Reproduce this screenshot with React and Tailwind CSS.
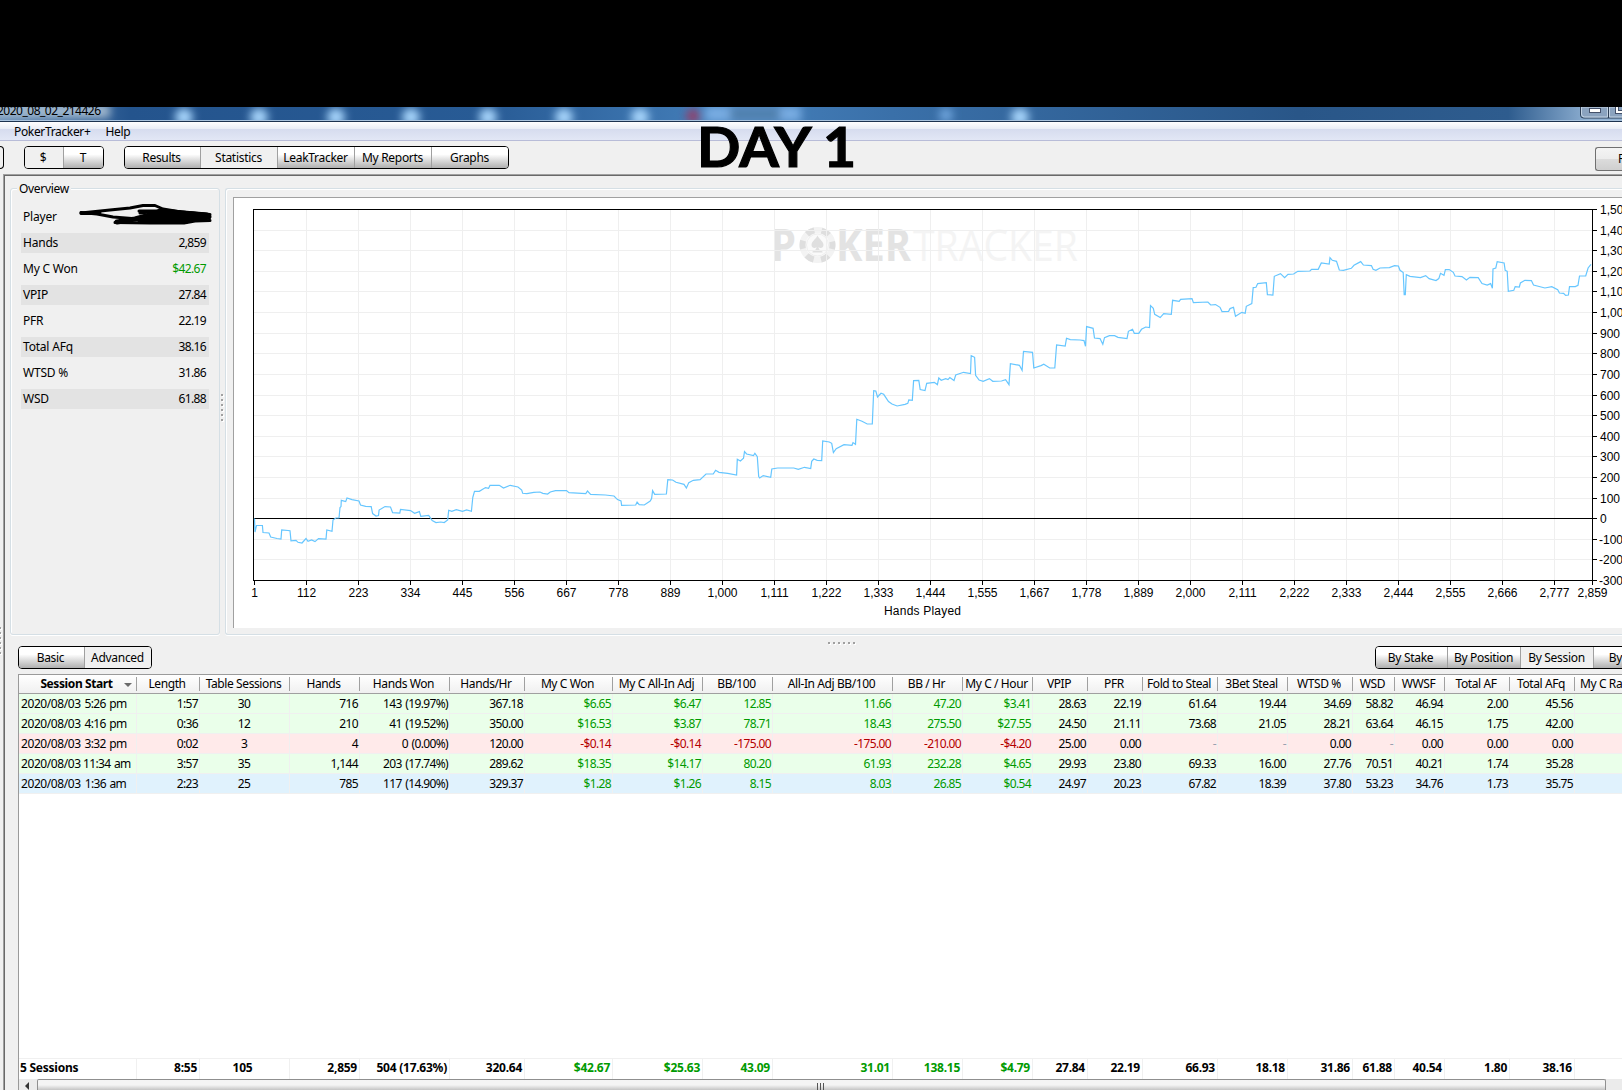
import React from 'react';
import clsx from 'clsx';

const stats = [
  { label: 'Player', value: '' },
  { label: 'Hands', value: '2,859' },
  { label: 'My C Won', value: '$42.67', green: true },
  { label: 'VPIP', value: '27.84' },
  { label: 'PFR', value: '22.19' },
  { label: 'Total AFq', value: '38.16' },
  { label: 'WTSD %', value: '31.86' },
  { label: 'WSD', value: '61.88' },
];

const columns = [
  { title: 'Session Start', w: 'w-[118px]' },
  { title: 'Length', w: 'w-[63px]' },
  { title: 'Table Sessions', w: 'w-[90px]', center: true },
  { title: 'Hands', w: 'w-[70px]' },
  { title: 'Hands Won', w: 'w-[90px]' },
  { title: 'Hands/Hr', w: 'w-[75px]' },
  { title: 'My C Won', w: 'w-[88px]', money: true },
  { title: 'My C All-In Adj', w: 'w-[90px]', money: true },
  { title: 'BB/100', w: 'w-[70px]', money: true },
  { title: 'All-In Adj BB/100', w: 'w-[120px]', money: true },
  { title: 'BB / Hr', w: 'w-[70px]', money: true },
  { title: 'My C / Hour', w: 'w-[70px]', money: true },
  { title: 'VPIP', w: 'w-[55px]' },
  { title: 'PFR', w: 'w-[55px]' },
  { title: 'Fold to Steal', w: 'w-[75px]' },
  { title: '3Bet Steal', w: 'w-[70px]' },
  { title: 'WTSD %', w: 'w-[65px]' },
  { title: 'WSD', w: 'w-[42px]' },
  { title: 'WWSF', w: 'w-[50px]' },
  { title: 'Total AF', w: 'w-[65px]' },
  { title: 'Total AFq', w: 'w-[65px]' },
];

const sessions = [
  { bg: 'bg-[#eaffea]', cells: ['5:26 pm', '1:57', '30', '716', '143 (19.97%)', '367.18', '$6.65', '$6.47', '12.85', '11.66', '47.20', '$3.41', '28.63', '22.19', '61.64', '19.44', '34.69', '58.82', '46.94', '2.00', '45.56'] },
  { bg: 'bg-[#eaffea]', cells: ['4:16 pm', '0:36', '12', '210', '41 (19.52%)', '350.00', '$16.53', '$3.87', '78.71', '18.43', '275.50', '$27.55', '24.50', '21.11', '73.68', '21.05', '28.21', '63.64', '46.15', '1.75', '42.00'] },
  { bg: 'bg-[#ffeaea]', cells: ['3:32 pm', '0:02', '3', '4', '0 (0.00%)', '120.00', '-$0.14', '-$0.14', '-175.00', '-175.00', '-210.00', '-$4.20', '25.00', '0.00', '-', '-', '0.00', '-', '0.00', '0.00', '0.00'] },
  { bg: 'bg-[#eaffea]', cells: ['11:34 am', '3:57', '35', '1,144', '203 (17.74%)', '289.62', '$18.35', '$14.17', '80.20', '61.93', '232.28', '$4.65', '29.93', '23.80', '69.33', '16.00', '27.76', '70.51', '40.21', '1.74', '35.28'] },
  { bg: 'bg-[#e0f2fd]', cells: ['1:36 am', '2:23', '25', '785', '117 (14.90%)', '329.37', '$1.28', '$1.26', '8.15', '8.03', '26.85', '$0.54', '24.97', '20.23', '67.82', '18.39', '37.80', '53.23', '34.76', '1.73', '35.75'] },
];

const totals = ['5 Sessions', '8:55', '105', '2,859', '504 (17.63%)', '320.64', '$42.67', '$25.63', '43.09', '31.01', '138.15', '$4.79', '27.84', '22.19', '66.93', '18.18', '31.86', '61.88', '40.54', '1.80', '38.16'];

const xLabels = ['1', '112', '223', '334', '445', '556', '667', '778', '889', '1,000', '1,111', '1,222', '1,333', '1,444', '1,555', '1,667', '1,778', '1,889', '2,000', '2,111', '2,222', '2,333', '2,444', '2,555', '2,666', '2,777'];
const yLabels = ['1,500', '1,400', '1,300', '1,200', '1,100', '1,000', '900', '800', '700', '600', '500', '400', '300', '200', '100', '0', '-100', '-200', '-300'];
const gridY = (i) => Math.round(209 + (i * 371) / 18) + 0.5;

const winnings = `254.5,518.5 255,532 256.5,525.5 262.4,525.5 263,532.5 269,533 270.7,537 277,538.5 281,539 281.7,530 290,530.7 291,540.8 296,540.3 298,542.3 302,543 306,538.5 308,541.3 311.6,540 315,541.6 318.5,538.6 326,539 326.8,530 332,531.3 333,520 335.8,518 339,518 340,507.6 341,506.6 341.3,500.3 345.7,501.6 347,498 352,499.6 359,501 360.5,505 365.7,506.3 371.2,506.6 372.6,513.6 376,516 378.5,515.6 379.1,510 385,506.6 390.5,507 392.6,512.6 399.8,513 400.5,509.3 410.5,510.6 414.6,513.3 419.4,511.6 420.8,516.3 428.7,515.3 432.2,520.6 436,522.6 440.8,522 444.2,522.6 447.7,520 448.7,510.3 451.8,511.3 456.3,509.6 462.5,511.3 466.6,510 471.4,511.3 472.8,497.3 474.5,491.3 479.3,491.3 485.5,487.6 488.6,488.3 490,485.3 499.3,485.3 503.5,488 510.3,485.3 518,487 521.7,490 522.7,493.3 526.9,493.6 533.8,492.3 540,492
542.8,493.3 547.6,494 550.3,492 555.5,490.6 566.5,490.6 569,492.6 585.8,493.6 587.5,491 590.6,494.3 605.4,495 614,496 617.5,499.6 621,501 621.6,505.3 635.7,505 637.1,502 639.2,504.6 644.3,505 650.2,501 651.6,498.6 652.6,490.6 654.7,494.3 666.4,494 667.8,479.6 672.6,480 676,482.3 684,484.3 686.4,488 688.8,482.6 693.3,480.3 700.1,479.6 706,474 713.2,474 715.6,470.3 719,472.3 727.7,473.3 736.6,475 737.3,459.3 740.4,461 743.5,458.3 744.5,451.6 746.6,454 753.5,455.6 754.9,453.3 757.3,456.6 758.7,476.6 759.7,478 763.2,475.6 770.7,477.3 771.8,469 777.6,468 793.8,468 798.3,469.3 804.5,467.3 810.7,468.6 811.7,461.3 813.8,459 817.2,460.3 821.7,460.6 822.7,441 829.3,442 831.7,443.3 833.4,452.6 836.2,448.6 844,444.6 852,445.3 853,442.6 855.5,444.3 856.8,419.3 862,421.3 867.2,424 872.3,424
873.7,390.6 875.8,391 877.5,397 881,393.3 883.7,394.3 888.5,401.6 892,404 897.1,406 905,404.3 907.8,403.3 908.8,400 912.3,400.3 913.6,380.6 918.8,380.3 920.2,389.6 925,390.6 926.7,383.3 934.3,382.3 937.4,384.6 938.8,378 941.2,380.3 945.7,378.6 948,379.6 949.8,377.6 954,380.6 955.7,375 963.6,372.3 970.5,373.6 971.2,355.6 974.6,357.3 975.6,375.3 979.1,380 983.2,381.3 989.4,378.6 992.8,381.3 1001.5,381 1005.6,379.6 1009,384.6 1010.4,363.6 1019.4,365.3 1022.1,370.3 1023.5,351.3 1032.5,352.3 1033.8,368 1041,365.6 1043.8,364.3 1049.7,368 1054.8,368 1056.6,345 1065.2,346 1066.5,338.3 1070.3,339.6 1080,340
1084,340.6 1085.5,346.3 1086.6,326.6 1093.1,328.3 1094.5,338 1100,338.6 1102.8,344.3 1104.5,337.6 1109.4,335.6 1114.6,335.6 1118,337.3 1127,338.6 1128.4,331.3 1132.5,329.3 1134.3,333.3 1138.8,333.3 1141.5,329.3 1145.7,327 1149.5,327.6 1150.5,305.6 1153.3,308.3 1154.7,314.3 1160.2,317.6 1163.7,313.6 1171.3,314.3 1172.6,300.3 1179.2,301.3 1180.6,299.3 1192,298.6 1193.4,302.6 1207.9,302 1210.7,305 1215.5,304.6 1220,307.3 1222,311.6 1228.6,311.3 1230,308.6 1233.5,307.3 1235.5,316.3 1241.8,312.3 1245.2,313.3 1246.3,306.3 1251.8,303.6 1253.2,287.6 1256,287.3 1257.7,283.6 1266.3,282.6 1267.4,294.6 1272.9,295 1274.3,276.3 1280.5,273.6 1284.6,277.6 1288,274.3 1293.6,274 1297.8,271.3 1309.9,271 1311.6,269.3 1318.2,269.3 1321.3,263 1329.2,264 1330,257.6 1332.3,260.3 1336.5,261.3 1339.3,270 1343.4,270.3 1351.3,268.3 1354,265.3 1360.7,261.6 1363.4,265 1371.4,265.6 1373.1,269.3 1375.9,270.3 1380,268 1389.4,267.6 1394.5,265.6 1398.4,266 1400,270.3 1403.2,272.6 1404.2,294.6 1405.3,294.6 1406.3,274.6 1410,276.3 1420.5,277.6 1425.7,275.6 1429.1,278.6 1436,280.6 1438.8,278.6 1440.5,273.3 1444,275.3 1445.4,269.6 1449.2,269.6 1453.3,272.3 1455,276 1462,276.6 1466.4,280 1469.9,277.3 1478.2,277.6 1482,283.6 1487.2,285 1490.6,283.6 1492.4,288.3 1493,269 1495.8,268 1497.2,261.6 1504.1,263 1505.2,270.3 1507.2,271.3 1508.3,291.3 1513.8,290.3 1515.2,286.6 1519.3,287 1520.4,283 1524.9,280.3 1531.4,280.6 1533.5,285 1544.9,288 1551.8,286.6 1557.7,289.6 1559.4,293 1563.6,293.3 1565.6,295.3 1568.4,295 1569.5,286.6 1575.3,286.6 1578,285.3 1579.5,276 1585.7,276 1588.1,268 1591,264.3`;

const Dots = ({ vertical, className }) => (
  <div className={clsx('flex gap-[3px]', vertical && 'flex-col', className)}>
    {[0, 1, 2, 3, 4, 5].map((i) => (
      <i key={i} className="h-[2px] w-[2px] bg-[#a0a0a0] shadow-[1px_1px_0_#fff]" />
    ))}
  </div>
);

const ButtonGroup = ({ items, active, itemClass, className }) => (
  <div className={clsx('flex h-[23px] shrink-0 overflow-hidden rounded-[4px] border border-black', className)}>
    {items.map((item, i) => (
      <button
        key={item}
        className={clsx(
          'flex shrink-0 items-center justify-center whitespace-nowrap pt-px pr-px text-[12px] tracking-[-0.3px]',
          i > 0 ? 'border-l border-[#a0a0a0]' : '-ml-[2px] pl-px',
          item === active ? 'bg-[#f0f0f0]' : 'bg-linear-to-b from-white from-35% to-[#b0b0b0]',
          itemClass
        )}
      >
        {item}
      </button>
    ))}
  </div>
);

const TitleBar = () => (
  <div className="relative h-[15px] overflow-hidden border-b border-[#1d3350] bg-[#2b5c93]">
    <svg className="block" width="1622" height="14" viewBox="0 107 1622 14">
      <defs>
        <linearGradient id="aero">
          <stop offset="0" stopColor="#5f86b0" />
          <stop offset="0.08" stopColor="#24548d" />
          <stop offset="0.3" stopColor="#285b95" />
          <stop offset="0.45" stopColor="#4580bb" />
          <stop offset="0.55" stopColor="#3a70a9" />
          <stop offset="0.8" stopColor="#295688" />
          <stop offset="0.93" stopColor="#2e5c8e" />
          <stop offset="0.98" stopColor="#8fb0d2" />
        </linearGradient>
        <filter id="soft" x="-50%" y="-50%" width="200%" height="200%">
          <feGaussianBlur stdDeviation="4" />
        </filter>
      </defs>
      <rect x="0" y="107" width="1622" height="14" fill="url(#aero)" />
      <g filter="url(#soft)">
        <rect x="-10" y="104" width="120" height="14" fill="#a3b9cf" />
        {[184, 259, 336, 411, 488, 564, 640, 1020].map((x) => (
          <circle key={x} cx={x} cy="117" r="9" fill="#a6d4fb" />
        ))}
        <circle cx="946" cy="115" r="7" fill="#6fa5dd" />
        <rect x="705" y="106" width="96" height="16" fill="#78ace2" />
        <rect x="730" y="108" width="50" height="12" fill="#4c7ba9" />
        <circle cx="693" cy="116" r="7" fill="#94406a" />
      </g>
      <rect x="0" y="120" width="1622" height="1" fill="#a9c3dd" />
      <path d="M1580.5 107v8q0 3 3 3H1622M1608.5 107v11" fill="none" stroke="#2c3e55" />
      <path d="M1581.5 107v7q0 3 3 3h23v-10z" fill="#8ba3bf" stroke="#c5d4e4" />
      <path d="M1609.5 107v10h14v-10z" fill="#8ba3bf" stroke="#c5d4e4" />
      <rect x="1589.5" y="108.5" width="11" height="4" fill="#fff" stroke="#44516a" />
      <rect x="1615.5" y="103.500" width="12" height="10" fill="#fff" stroke="#44516a" />
      <rect x="1618.5" y="106.500" width="7" height="4" fill="#8ba3bf" stroke="#44516a" />
    </svg>
    <span className="absolute -top-[5px] -left-[3px] text-[12px] leading-[17px] tracking-[-0.5px]">2020_08_02_214426</span>
  </div>
);

const Scribble = () => (
  <svg className="absolute top-[-3px] left-[58px]" width="134" height="24" viewBox="79 204 134 24" fill="none" stroke="#000" strokeWidth="3" strokeLinecap="round" strokeLinejoin="round">
    <path d="M81 213L110 210 130 208 143 205.500H155L163 209 181 212 210 214.500" />
    <path d="M81 212.500L97 214 113 217 132 218.500M81 213.500L100 213" />
    <path d="M139 211L160 211 140 213M115 222.500L150 223 184 223 195 221 210 220.500" />
    <path d="M117 222L135 219 150 215 165 213 209 217 190 219 140 221 186 221 207 215 160 211 148 217 205 219" strokeWidth="5" />
    <path d="M145 216L165 210 207 214 200 220 150 222z" fill="#000" strokeWidth="2" />
  </svg>
);

const Chart = () => (
  <svg className="block" width="1388" height="430" viewBox="234 198 1388 430" fontFamily="'Liberation Sans', Arial, sans-serif" fontSize="12">
    {/* watermark */}
    <g fontFamily="'Open Sans', sans-serif" fontSize="44">
      <g fill="#e3e3e3" fontWeight="700">
        <text x="771" y="261" textLength="25" lengthAdjust="spacingAndGlyphs">P</text>
        <text x="836" y="261" textLength="75" lengthAdjust="spacingAndGlyphs">KER</text>
      </g>
      <text x="913" y="261" textLength="165" lengthAdjust="spacingAndGlyphs" fill="#f4f4f4">TRACKER</text>
      <circle cx="817.5" cy="245" r="15" fill="#fafafa" stroke="#f3f3f3" strokeWidth="6" />
      <circle cx="817.5" cy="245" r="15" fill="none" stroke="#dedede" strokeWidth="6" strokeDasharray="8.2 7.508" strokeDashoffset="4.1" />
      <circle cx="817.5" cy="245" r="11" fill="#fafafa" stroke="#eee" />
      <path d="M817.500 235.500c2 4 6 6 6 9.500 0 3-3.500 4-5 2 0 2.500 1.500 3.500 4 4.500v1h-10v-1c2.500-1 4-2 4-4.500-1.500 2-5 1-5-2 0-3.500 4-5.500 6-9.500z" fill="#dfdfdf" />
    </g>
    <g shapeRendering="crispEdges" stroke="#efefef">
      {yLabels.map((l, i) => (
        <line key={l} x1="254" x2="1592" y1={gridY(i)} y2={gridY(i)} />
      ))}
      {xLabels.slice(1).map((l, i) => (
        <line key={l} y1="210" y2="580" x1={306.5 + i * 52} x2={306.5 + i * 52} />
      ))}
    </g>
    <g shapeRendering="crispEdges" stroke="#000" fill="none">
      <rect x="253.5" y="209.5" width="1339" height="371" />
      <line x1="254" x2="1592" y1="518.5" y2="518.5" />
      {yLabels.map((l, i) => (
        <line key={l} x1="1592" x2="1597" y1={gridY(i)} y2={gridY(i)} />
      ))}
      {xLabels.map((l, i) => (
        <line key={l} y1="580" y2="585" x1={254.5 + i * 52} x2={254.5 + i * 52} />
      ))}
      <line y1="580" y2="585" x1="1592.5" x2="1592.5" />
    </g>
    <polyline points={winnings} fill="none" stroke="#66c6ff" strokeWidth="1.2" />
    <g fill="#000">
      {xLabels.map((l, i) => (
        <text key={l} x={254.5 + i * 52} y="597" textAnchor="middle">{l}</text>
      ))}
      <text x="1592.5" y="597" textAnchor="middle">2,859</text>
      {yLabels.map((l, i) => (
        <text key={l} x={l[0] === '-' ? 1599 : 1600} y={gridY(i) + 4}>{l}</text>
      ))}
      <text x="884" y="615" textLength="77">Hands Played</text>
    </g>
  </svg>
);

const tone = (col, value) => {
  if (value === '-') return 'text-gray-400';
  if (!col.money) return 'text-black';
  return value[0] === '-' ? 'text-[#b40000]' : 'text-[#009a00]';
};

const SessionTable = () => (
  <div className="flex grow flex-col overflow-hidden border-t border-l border-[#9a9a9a] bg-white">
    <div className="flex h-[19px] w-[1700px] shrink-0 items-center border-b border-[#a0a0a0] bg-linear-to-b from-white to-[#f0f0f0] text-[12px] tracking-[-0.4px]">
      {columns.map((col, i) => (
        <div key={col.title} className={clsx('relative flex h-[14px] shrink-0 items-center justify-center whitespace-nowrap border-r border-[#a0a0a0]', col.w, i === 0 ? 'pr-[2px] font-bold tracking-[-0.4px]' : 'pr-[2px]')}>
          {col.title}
          {i === 0 && <i className="absolute top-[6px] right-[4px] border-x-[4px] border-t-[4px] border-x-transparent border-t-[#6b6b6b]" />}
        </div>
      ))}
      <div className="pl-[5px] whitespace-nowrap">My C Rake</div>
    </div>
    {sessions.map((row) => (
      <div key={row.cells[0]} className={clsx('flex h-5 w-[1700px] shrink-0 border-b border-[#f0f0f0] text-[12px] leading-[19px] tracking-[-0.64px] [word-spacing:1px]', row.bg)}>
        {row.cells.map((value, i) => (
          <div key={i} className={clsx('shrink-0 border-r border-[#f0f0f0] whitespace-nowrap', columns[i].w, columns[i].center ? 'pr-px text-center' : 'pr-px text-right', tone(columns[i], value))}>
            {i === 0 ? (
              <div className="flex pl-[2px]">
                <span className="w-[62px] text-left tracking-[-0.42px]">2020/08/03</span>
                <span className="w-[45px] text-center">{value}</span>
              </div>
            ) : value}
          </div>
        ))}
      </div>
    ))}
    <div className="grow" />
    <div className="flex h-[21px] w-[1700px] shrink-0 border-t border-[#f0f0f0] text-[12px] leading-[17px] font-bold tracking-[-0.25px]">
      {totals.map((value, i) => (
        <div key={i} className={clsx('shrink-0 border-r border-[#f0f0f0] whitespace-nowrap', columns[i].w, columns[i].center ? 'pr-1 text-center' : i === 0 ? 'pl-px text-left' : 'pr-0.5 text-right', tone(columns[i], value))}>
          {value}
        </div>
      ))}
    </div>
    {/* horizontal scrollbar */}
    <div className="flex h-[11px] shrink-0 bg-[#ebebeb]">
      <div className="flex w-[18px] justify-center pt-[3px] pr-0.5">
        <i className="h-0 border-y-[4px] border-r-[4px] border-y-transparent border-r-[#333]" />
      </div>
      <div className="flex w-[1569px] justify-center gap-[2px] rounded-t-[2px] border border-b-0 border-[#8f8f8f] bg-linear-to-b from-[#f4f4f4] from-50% to-[#c4c4c4] pt-[3px] pr-0.5">
        <i className="h-2 w-px bg-[#555]" />
        <i className="h-2 w-px bg-[#555]" />
        <i className="h-2 w-px bg-[#555]" />
      </div>
    </div>
  </div>
);

export default function App() {
  return (
    <div className="relative flex h-[1090px] w-[1622px] flex-col overflow-hidden bg-[#f0f0f0] font-['Noto_Sans',sans-serif] text-black">
      <div className="h-[107px] shrink-0 bg-black" />
      <TitleBar />
      <div className="flex h-[19px] shrink-0 items-center gap-[15px] border-b border-[#b8bcd8] bg-[linear-gradient(#fff,#e9edf6_7px,#d6dcef_7px,#e2e7f5)] pt-[2px] pl-[14px] text-[12px] tracking-[-0.34px]">
        <span>PokerTracker+</span>
        <span>Help</span>
      </div>

      <div className="flex h-[33px] shrink-0 items-center">
        <div className="h-[23px] w-1 rounded-r-[4px] border border-l-0 border-black" />
        <ButtonGroup items={['$', 'T']} active="$" className="ml-5 w-[80px]" itemClass="w-[40px]" />
        <ButtonGroup items={['Results', 'Statistics', 'LeakTracker', 'My Reports', 'Graphs']} active="Statistics" className="ml-5 w-[385px]" itemClass="w-[77px]" />
        <div className="mt-0.5 ml-auto flex h-6 w-[27px] items-center overflow-hidden rounded-l-[3px] border border-r-0 border-[#707070] bg-[linear-gradient(#f4f4f4,#ececec_50%,#dcdcdc_50%,#cfcfcf)] pl-[22px] text-[12px]">Refresh</div>
      </div>

      <div className="flex min-h-0 grow">
        <div className="flex w-[3px] shrink-0 pt-[453px]">
          <Dots vertical className="-ml-px" />
        </div>
        <div className="flex min-w-0 grow flex-col border-t border-l border-[#a0a0a0]">
          <div className="flex min-h-0 grow flex-col border-t border-l border-[#696969]">
            <div className="flex h-[459px] shrink-0 pt-3 pl-[5px]">
              <fieldset className="h-[447px] w-[209px] shrink-0 rounded-[3px] border border-[#d5dfe5] shadow-[inset_1px_1px_0_#fff,0_1px_0_#fff]">
                <div className="-mt-[9px] ml-[6px] w-fit bg-[#f0f0f0] px-[2px] text-[12px] leading-[18px] tracking-[-0.3px]">Overview</div>
                <div className="flex flex-col gap-[6px] px-[10px] pt-[9px]">
                  {stats.map((s, i) => (
                    <div key={s.label} className={clsx('relative flex h-5 w-[188px] items-center justify-between px-[2px] text-[12px]', i % 2 === 1 && 'bg-[#e3e3e3]')}>
                      <span className="tracking-[-0.2px]">{s.label}</span>
                      <span className={clsx('pr-px tracking-[-0.65px]', s.green && 'text-[#009a00]')}>{s.value}</span>
                      {i === 0 && <Scribble />}
                    </div>
                  ))}
                </div>
              </fieldset>
              <Dots vertical className="mt-[206px] ml-px w-1 shrink-0" />
              <div className="h-[447px] min-w-0 grow overflow-hidden rounded-l-[3px] border border-r-0 border-[#d5dfe5] pt-2 pl-[7px] shadow-[inset_1px_1px_0_#fff,0_1px_0_#fff]">
                <div className="h-[431px] w-[1389px] border-t border-l border-[#a0a0a0] bg-white">
                  <Chart />
                </div>
              </div>
            </div>

            <div className="flex h-[39px] shrink-0 items-start pl-[13px]">
              <ButtonGroup items={['Basic', 'Advanced']} active="Advanced" className="mt-[11px] w-[134px]" itemClass="w-[67px]" />
              <Dots className="mt-[7px] ml-[676px]" />
              <ButtonGroup items={['By Stake', 'By Position', 'By Session', 'By Date']} active="By Session" className="mt-[11px] ml-[520px] w-[300px]" itemClass="w-[73px]" />
            </div>

            <div className="flex min-h-0 grow pl-[13px]">
              <SessionTable />
            </div>
          </div>
        </div>
      </div>

      <div className="absolute top-[112px] left-[697px] origin-left scale-x-[1.02] font-['Lato',sans-serif] text-[56px] leading-[68px] font-bold whitespace-nowrap [-webkit-text-stroke:1.2px_#000]">DAY 1</div>
    </div>
  );
}
